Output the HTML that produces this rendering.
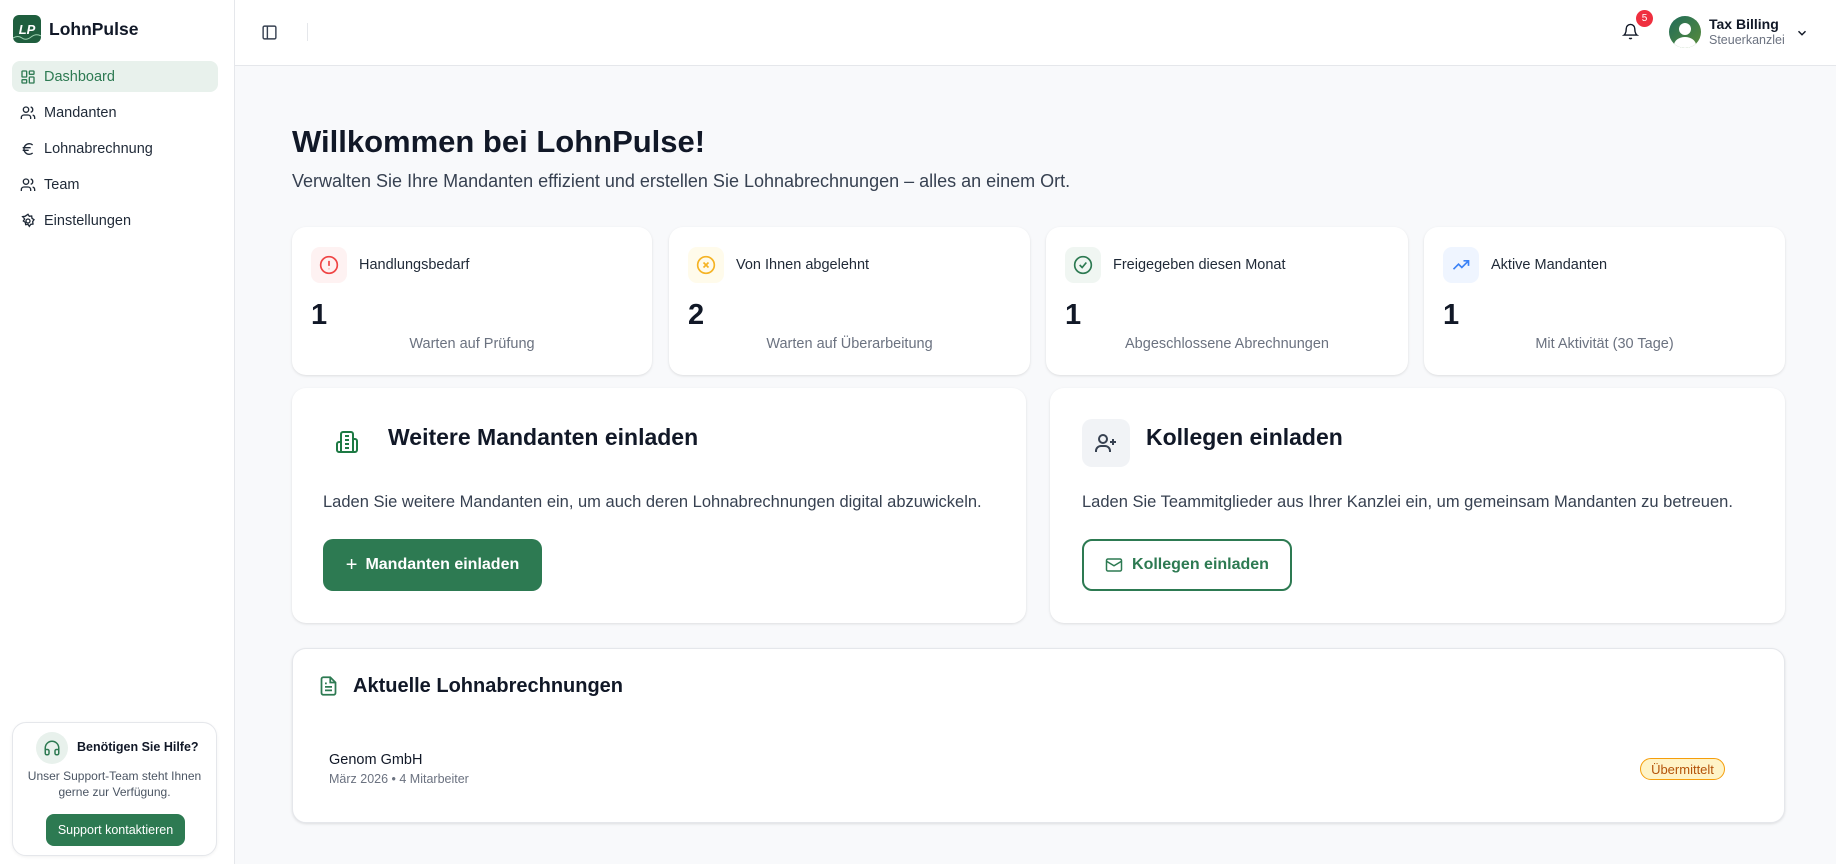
<!DOCTYPE html>
<html><head><meta charset="utf-8"><style>
*{box-sizing:border-box;margin:0;padding:0}
body{width:1836px;height:864px;overflow:hidden;font-family:"Liberation Sans",sans-serif;background:#f8f9fb;position:relative;color:#111827}
.a{position:absolute}
.side{left:0;top:0;width:235px;height:864px;background:#fff;border-right:1px solid #e5e7eb}
.hdr{left:235px;top:0;right:0;height:66px;background:#fff;border-bottom:1px solid #e5e7eb}
.nav{left:12px;width:206px;height:31px;border-radius:8px;display:flex;align-items:center;padding-left:8px;font-size:14.5px;color:#1f2937}
.nav svg{margin-right:8px}
.card{background:#fff;border-radius:14px;box-shadow:0 1px 3px rgba(0,0,0,.08),0 1px 2px rgba(0,0,0,.04)}
.ib{width:36px;height:36px;border-radius:9px;display:flex;align-items:center;justify-content:center}
.lbl{font-size:14.5px;color:#1f2937}
.num{font-size:29px;font-weight:bold;color:#111827}
.sub{font-size:14.5px;color:#6b7280;text-align:center;width:100%}
svg{display:block}
</style></head><body>
<div class="a side">
 <div class="a" style="left:13px;top:15px;width:28px;height:28px;border-radius:6px;background:#1f5e3e;color:#fff;font-size:13px;font-weight:bold;font-style:italic;display:flex;align-items:center;justify-content:center;overflow:hidden">LP<svg class="a" style="left:0;bottom:2px" width="28" height="8"><path d="M0 5 Q5 2 9 5 T18 4 T28 3" stroke="#9fd3b2" stroke-width="1" fill="none"/></svg></div>
 <div class="a" style="left:49px;top:19px;font-size:17.5px;font-weight:bold">LohnPulse</div>
 <div class="a nav" style="top:61px;background:#e8f1ec;color:#2d7a52"><svg width="16" height="16" viewBox="0 0 24 24" fill="none" stroke="#2d7a52" stroke-width="2"><rect x="3" y="3" width="7" height="9" rx="1"/><rect x="14" y="3" width="7" height="5" rx="1"/><rect x="14" y="12" width="7" height="9" rx="1"/><rect x="3" y="16" width="7" height="5" rx="1"/></svg>Dashboard</div>
 <div class="a nav" style="top:97px"><svg width="16" height="16" viewBox="0 0 24 24" fill="none" stroke="#1f2937" stroke-width="2"><circle cx="9" cy="7" r="4"/><path d="M2 21v-2a4 4 0 0 1 4-4h6a4 4 0 0 1 4 4v2M16 3.1a4 4 0 0 1 0 7.8M22 21v-2a4 4 0 0 0-3-3.9"/></svg>Mandanten</div>
 <div class="a nav" style="top:133px"><svg width="16" height="16" viewBox="0 0 24 24" fill="none" stroke="#1f2937" stroke-width="2"><path d="M4 10h12M4 14h9M19 6a7.7 7.7 0 0 0-5.2-2A7.9 7.9 0 0 0 6 12c0 4.4 3.5 8 7.8 8 2 0 3.8-.8 5.2-2"/></svg>Lohnabrechnung</div>
 <div class="a nav" style="top:169px"><svg width="16" height="16" viewBox="0 0 24 24" fill="none" stroke="#1f2937" stroke-width="2"><circle cx="9" cy="7" r="4"/><path d="M2 21v-2a4 4 0 0 1 4-4h6a4 4 0 0 1 4 4v2M16 3.1a4 4 0 0 1 0 7.8M22 21v-2a4 4 0 0 0-3-3.9"/></svg>Team</div>
 <div class="a nav" style="top:205px"><svg width="16" height="16" viewBox="0 0 24 24" fill="none" stroke="#1f2937" stroke-width="2"><circle cx="12" cy="12" r="3"/><path d="M12 2l2 3 3.5-.5.5 3.5 3 2-2 3 .5 3.5-3.5.5-2 3-2-3-3.5.5-.5-3.5-3-2 2-3L4 5.5l3.5-.5z"/></svg>Einstellungen</div>
 <div class="a card" style="left:12px;top:722px;width:205px;height:134px;border:1px solid #e5e7eb;box-shadow:0 1px 3px rgba(0,0,0,.06)">
  <div class="a" style="left:23px;top:9px;width:32px;height:32px;border-radius:50%;background:#e8f1ec;display:flex;align-items:center;justify-content:center"><svg width="18" height="18" viewBox="0 0 24 24" fill="none" stroke="#2d7a52" stroke-width="2"><path d="M3 14h3a2 2 0 0 1 2 2v3a2 2 0 0 1-2 2H5a2 2 0 0 1-2-2v-7a9 9 0 0 1 18 0v7a2 2 0 0 1-2 2h-1a2 2 0 0 1-2-2v-3a2 2 0 0 1 2-2h3"/></svg></div>
  <div class="a" style="left:64px;top:17px;font-size:12.5px;font-weight:bold;color:#111827">Benötigen Sie Hilfe?</div>
  <div class="a" style="left:0;top:45px;width:203px;text-align:center;font-size:12px;line-height:16px;color:#4b5563">Unser Support-Team steht Ihnen<br>gerne zur Verfügung.</div>
  <div class="a" style="left:33px;top:91px;width:139px;height:32px;border-radius:8px;background:#2d7a52;color:#fff;font-size:12.5px;display:flex;align-items:center;justify-content:center">Support kontaktieren</div>
 </div>
</div>
<div class="a hdr">
 <svg class="a" style="left:26px;top:24px" width="17" height="17" viewBox="0 0 24 24" fill="none" stroke="#374151" stroke-width="2"><rect x="3" y="3" width="18" height="18" rx="2"/><path d="M9 3v18"/></svg>
 <div class="a" style="left:72px;top:23px;width:1px;height:18px;background:#e5e7eb"></div>
 <svg class="a" style="left:1387px;top:23px" width="17" height="17" viewBox="0 0 24 24" fill="none" stroke="#111827" stroke-width="2"><path d="M6 8a6 6 0 0 1 12 0c0 7 3 9 3 9H3s3-2 3-9M10.3 21a1.9 1.9 0 0 0 3.4 0"/></svg>
 <div class="a" style="left:1401px;top:10px;width:17px;height:17px;border-radius:50%;background:#ef2f3f;color:#fff;font-size:10px;display:flex;align-items:center;justify-content:center">5</div>
 <div class="a" style="left:1434px;top:16px;width:32px;height:32px;border-radius:50%;background:linear-gradient(135deg,#1f6b5a,#5a8c3a);overflow:hidden"><div class="a" style="left:10px;top:7px;width:12px;height:12px;border-radius:50%;background:#fff"></div><div class="a" style="left:5px;top:21px;width:22px;height:16px;border-radius:50%;background:#fff"></div></div>
 <div class="a" style="left:1474px;top:16px;font-size:14px;font-weight:bold;color:#111827">Tax Billing</div>
 <div class="a" style="left:1474px;top:33px;font-size:12.5px;color:#6b7280">Steuerkanzlei</div>
 <svg class="a" style="left:1560px;top:26px" width="14" height="14" viewBox="0 0 24 24" fill="none" stroke="#111827" stroke-width="2.5"><path d="M6 9l6 6 6-6"/></svg>
</div>
<div class="a" style="left:292px;top:124px;font-size:31px;font-weight:bold;color:#111827">Willkommen bei LohnPulse!</div>
<div class="a" style="left:292px;top:171px;font-size:18px;color:#374151">Verwalten Sie Ihre Mandanten effizient und erstellen Sie Lohnabrechnungen – alles an einem Ort.</div>

<div class="a card" style="left:292px;top:227px;width:360px;height:148px">
 <div class="a ib" style="left:19px;top:20px;background:#fef2f2"><svg width="20" height="20" viewBox="0 0 24 24" fill="none" stroke="#ef4444" stroke-width="2"><circle cx="12" cy="12" r="10"/><path d="M12 7v6M12 16.5v.5"/></svg></div>
 <div class="a lbl" style="left:67px;top:30px">Handlungsbedarf</div>
 <div class="a num" style="left:19px;top:72px">1</div>
 <div class="a sub" style="left:0;top:109px">Warten auf Prüfung</div>
</div>
<div class="a card" style="left:669px;top:227px;width:361px;height:148px">
 <div class="a ib" style="left:19px;top:20px;background:#fffbeb"><svg width="20" height="20" viewBox="0 0 24 24" fill="none" stroke="#f5b324" stroke-width="2"><circle cx="12" cy="12" r="10"/><path d="M9 9l6 6M15 9l-6 6"/></svg></div>
 <div class="a lbl" style="left:67px;top:30px">Von Ihnen abgelehnt</div>
 <div class="a num" style="left:19px;top:72px">2</div>
 <div class="a sub" style="left:0;top:109px">Warten auf Überarbeitung</div>
</div>
<div class="a card" style="left:1046px;top:227px;width:362px;height:148px">
 <div class="a ib" style="left:19px;top:20px;background:#f0f6f2"><svg width="20" height="20" viewBox="0 0 24 24" fill="none" stroke="#2d7a52" stroke-width="2"><circle cx="12" cy="12" r="10"/><path d="M8 12l3 3 5-6"/></svg></div>
 <div class="a lbl" style="left:67px;top:30px">Freigegeben diesen Monat</div>
 <div class="a num" style="left:19px;top:72px">1</div>
 <div class="a sub" style="left:0;top:109px">Abgeschlossene Abrechnungen</div>
</div>
<div class="a card" style="left:1424px;top:227px;width:361px;height:148px">
 <div class="a ib" style="left:19px;top:20px;background:#eff5ff"><svg width="20" height="20" viewBox="0 0 24 24" fill="none" stroke="#3b82f6" stroke-width="2"><path d="M3 17l6-6 4 4 8-8M15 7h6v6"/></svg></div>
 <div class="a lbl" style="left:67px;top:30px">Aktive Mandanten</div>
 <div class="a num" style="left:19px;top:72px">1</div>
 <div class="a sub" style="left:0;top:109px">Mit Aktivität (30 Tage)</div>
</div>

<div class="a card" style="left:292px;top:388px;width:734px;height:235px">
 <svg class="a" style="left:43px;top:42px" width="24" height="24" viewBox="0 0 24 24" fill="none" stroke="#1e7a44" stroke-width="2"><path d="M6 22V4a2 2 0 0 1 2-2h8a2 2 0 0 1 2 2v18zM6 12H4a2 2 0 0 0-2 2v6a2 2 0 0 0 2 2h2M18 9h2a2 2 0 0 1 2 2v9a2 2 0 0 1-2 2h-2M10 6h4M10 10h4M10 14h4M10 18h4"/></svg>
 <div class="a" style="left:96px;top:36px;font-size:23px;font-weight:bold;color:#111827">Weitere Mandanten einladen</div>
 <div class="a" style="left:31px;top:105px;font-size:16.5px;color:#374151">Laden Sie weitere Mandanten ein, um auch deren Lohnabrechnungen digital abzuwickeln.</div>
 <div class="a" style="left:31px;top:151px;width:219px;height:52px;border-radius:10px;background:#2d7a52;color:#fff;font-size:16px;font-weight:bold;display:flex;align-items:center;justify-content:center"><span style="font-size:20px;margin-right:8px;font-weight:normal">+</span>Mandanten einladen</div>
</div>
<div class="a card" style="left:1050px;top:388px;width:735px;height:235px">
 <div class="a" style="left:32px;top:31px;width:48px;height:48px;border-radius:10px;background:#f1f3f6;display:flex;align-items:center;justify-content:center"><svg width="24" height="24" viewBox="0 0 24 24" fill="none" stroke="#374151" stroke-width="2"><circle cx="9" cy="8" r="4"/><path d="M2 21v-1a5 5 0 0 1 5-5h4a5 5 0 0 1 5 5v1M19 8v6M16 11h6"/></svg></div>
 <div class="a" style="left:96px;top:36px;font-size:23px;font-weight:bold;color:#111827">Kollegen einladen</div>
 <div class="a" style="left:32px;top:105px;font-size:16.5px;color:#374151">Laden Sie Teammitglieder aus Ihrer Kanzlei ein, um gemeinsam Mandanten zu betreuen.</div>
 <div class="a" style="left:32px;top:151px;width:210px;height:52px;border-radius:10px;border:2px solid #2d7a52;color:#2d7a52;font-size:16px;font-weight:bold;display:flex;align-items:center;justify-content:center"><svg width="18" height="18" viewBox="0 0 24 24" fill="none" stroke="#2d7a52" stroke-width="2" style="margin-right:9px"><rect x="2" y="4" width="20" height="16" rx="2"/><path d="M22 7l-10 6L2 7"/></svg>Kollegen einladen</div>
</div>

<div class="a card" style="left:292px;top:648px;width:1493px;height:175px;border:1px solid #e5e7eb">
 <svg class="a" style="left:25px;top:26px" width="21" height="22" viewBox="0 0 24 24" fill="none" stroke="#2d7a52" stroke-width="2"><path d="M14 2H6a2 2 0 0 0-2 2v16a2 2 0 0 0 2 2h12a2 2 0 0 0 2-2V8z"/><path d="M14 2v6h6M16 13H8M16 17H8M10 9H8"/></svg>
 <div class="a" style="left:60px;top:26px;font-size:20px;font-weight:bold;color:#111827">Aktuelle Lohnabrechnungen</div>
 <div class="a" style="left:36px;top:103px;font-size:14.5px;color:#111827">Genom GmbH</div>
 <div class="a" style="left:36px;top:123px;font-size:12.5px;color:#6b7280">März 2026 • 4 Mitarbeiter</div>
 <div class="a" style="left:1347px;top:109px;width:85px;height:22px;border-radius:11px;background:#fef3c7;border:1px solid #f59e0b;color:#b45309;font-size:13px;display:flex;align-items:center;justify-content:center">Übermittelt</div>
</div>
</body></html>
